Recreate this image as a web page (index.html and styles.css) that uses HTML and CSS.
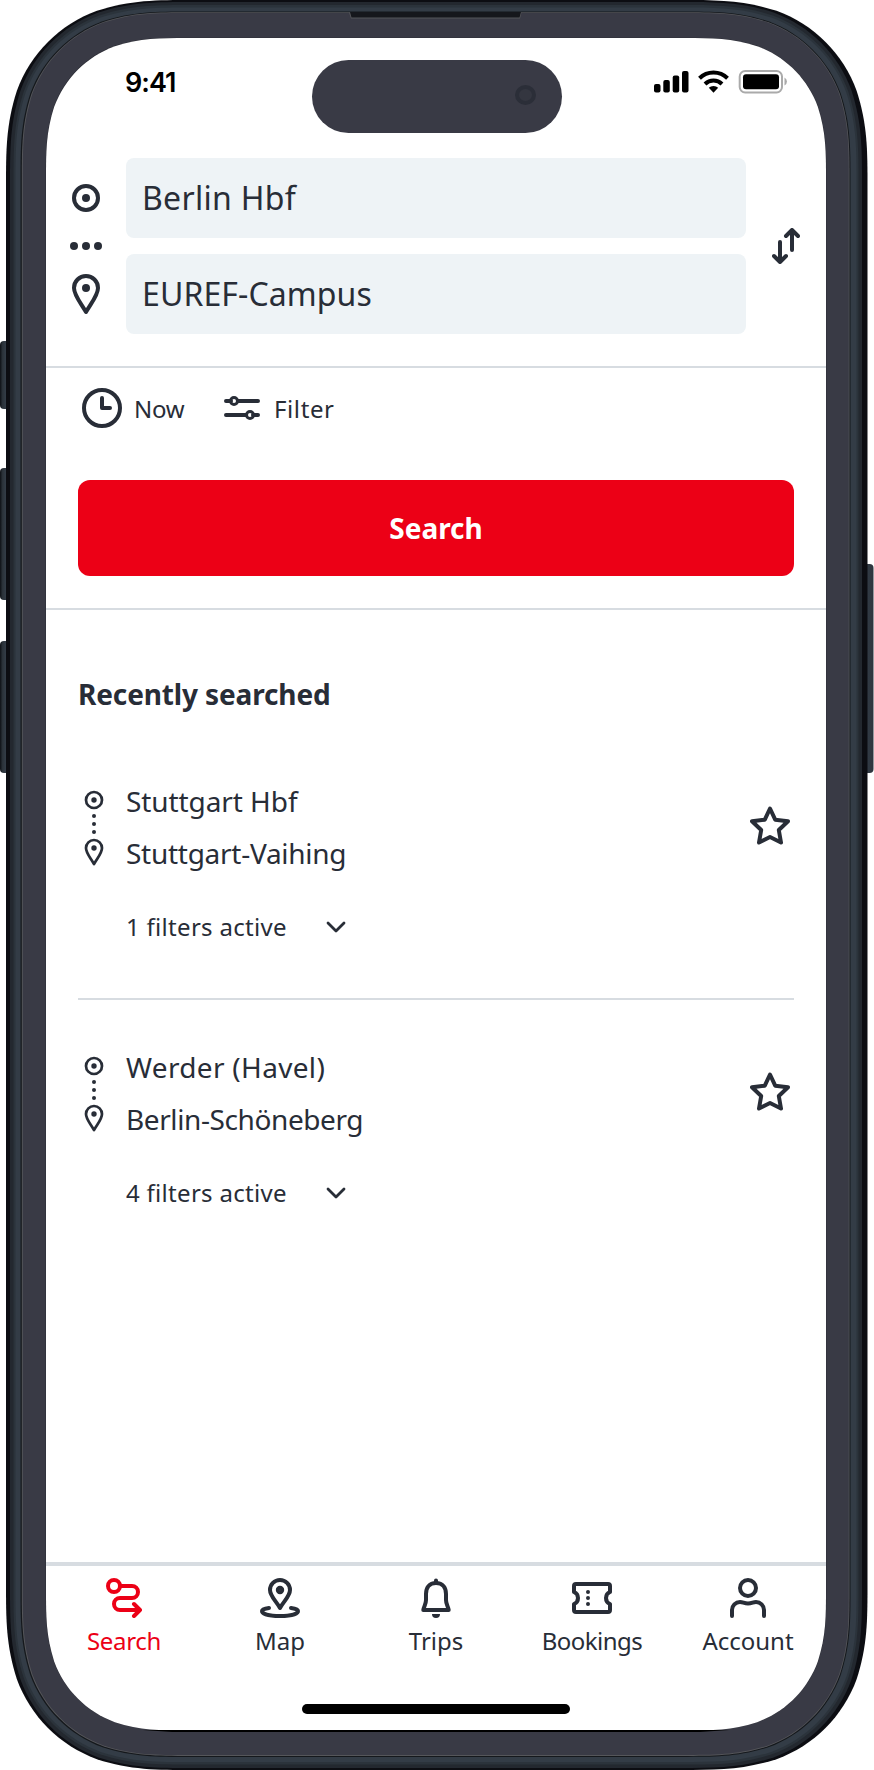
FILE: index.html
```html
<!DOCTYPE html>
<html lang="en">
<head>
<meta charset="utf-8">
<title>Search</title>
<link rel="stylesheet" href="styles.css">
</head>
<body>
<div class="device">
  <svg class="frame" id="frame" width="874" height="1770" viewBox="0 0 874 1770" aria-hidden="true">
    <defs>
      <linearGradient id="side" x1="0" x2="1"><stop offset="0" stop-color="#0d1015"/><stop offset=".2" stop-color="#2a3138"/><stop offset=".45" stop-color="#323b45"/><stop offset="1" stop-color="#2c343d"/></linearGradient>
    </defs>
    <g fill="url(#side)">
      <rect x="0" y="341" width="12" height="68" rx="4"/>
      <rect x="0" y="468" width="12" height="132" rx="4"/>
      <rect x="0" y="641" width="12" height="132" rx="4"/>
      <rect x="862" y="564" width="11.500" height="209" rx="4"/>
    </g>
  </svg>
  <main class="screen">
    <header class="status">
      <span class="time">9:41</span>
      <div class="island"><span class="camera"></span></div>
      <svg class="signals" width="136" height="24" viewBox="0 0 136 24">
        <rect x="0" y="14" width="6.500" height="8.500" rx="2"/><rect x="9.300" y="10" width="6.500" height="12.500" rx="2"/><rect x="18.700" y="5.500" width="6.500" height="17" rx="2"/><rect x="28" y="1" width="6.500" height="21.500" rx="2"/>
        <g fill="none" stroke="#000" stroke-width="4"><path d="M45.500 8.200a20 20 0 0 1 28 0"/><path d="M51 14a12.200 12.200 0 0 1 17 0"/></g>
        <path d="M54.800 17.800a6.800 6.800 0 0 1 9.400 0L59.500 22.800z"/>
        <rect x="85.700" y="1" width="42.300" height="21.500" rx="5.500" fill="none" stroke="#aaa" stroke-width="2"/><rect x="89" y="4.300" width="36" height="15" rx="3"/><path d="M130.500 7.500a4.500 4.500 0 0 1 0 8z" fill="#aaa"/>
      </svg>
    </header>

    <section class="route">
      <svg class="route-icons" width="32" height="160" viewBox="0 0 32 160">
        <circle cx="16" cy="24" r="12" fill="none" stroke="#282d37" stroke-width="4"/><circle cx="16" cy="24" r="4"/>
        <circle cx="4" cy="72" r="4"/><circle cx="16" cy="72" r="4"/><circle cx="28" cy="72" r="4"/>
        <path d="M16 102A12 12 0 0 0 4 114C4 121 10 128 16 138 22 128 28 121 28 114A12 12 0 0 0 16 102z" fill="none" stroke="#282d37" stroke-width="4" stroke-linejoin="round"/><circle cx="16" cy="114" r="4"/>
      </svg>
      <div class="fields">
        <div class="field from">Berlin Hbf</div>
        <div class="field to">EUREF-Campus</div>
      </div>
      <svg class="line-icon swap" width="28" height="36" viewBox="0 0 28 36"><path d="M20 22V2M14 8l6-6 6 6M8 14v20M2 28l6 6 6-6"/></svg>
    </section>

    <section class="options">
      <div class="chips">
        <svg class="line-icon" width="40" height="40" viewBox="0 0 40 40"><circle cx="20" cy="20" r="18"/><path d="M20 10v10h8"/></svg>
        <span class="now">Now</span>
        <svg class="line-icon" width="36" height="24" viewBox="0 0 36 24"><path d="M2 5h5M14 5h20M2 19h20M29 19h5"/><g stroke-width="3"><circle cx="10" cy="5" r="3.500"/><circle cx="26" cy="19" r="3.500"/></g></svg>
        <span class="filter">Filter</span>
      </div>
      <button class="search">Search</button>
    </section>

    <section class="recent">
      <h2>Recently searched</h2>
      <article class="trip">
        <svg class="stops" width="20" height="76" viewBox="0 0 20 76"><g fill="none" stroke="#282d37" stroke-width="2.700" stroke-linejoin="round"><circle cx="10" cy="10" r="8"/><path d="M10 50A8 8 0 0 0 2 58C2 63 6 67 10 74 14 67 18 63 18 58A8 8 0 0 0 10 50z"/></g><circle cx="10" cy="10" r="2.700"/><circle cx="10" cy="26" r="2"/><circle cx="10" cy="34" r="2"/><circle cx="10" cy="42" r="2"/><circle cx="10" cy="58" r="2.700"/></svg>
        <div class="info"><p class="s1">Stuttgart Hbf</p><p class="s2">Stuttgart-Vaihing</p>
          <div class="filters"><span>1 filters active</span><svg class="line-icon thin" width="20" height="12" viewBox="0 0 20 12"><path d="M2 2l8 8 8-8"/></svg></div></div>
        <svg class="line-icon star" width="40" height="40" viewBox="0 0 40 40"><path d="M20 2.500L25.200 13.700 38 15.200 28.800 24 31 36.500 20 31 9 36.500 11.200 24 2 15.200 14.800 13.700z"/></svg>
      </article>
      <article class="trip">
        <svg class="stops" width="20" height="76" viewBox="0 0 20 76"><g fill="none" stroke="#282d37" stroke-width="2.700" stroke-linejoin="round"><circle cx="10" cy="10" r="8"/><path d="M10 50A8 8 0 0 0 2 58C2 63 6 67 10 74 14 67 18 63 18 58A8 8 0 0 0 10 50z"/></g><circle cx="10" cy="10" r="2.700"/><circle cx="10" cy="26" r="2"/><circle cx="10" cy="34" r="2"/><circle cx="10" cy="42" r="2"/><circle cx="10" cy="58" r="2.700"/></svg>
        <div class="info"><p class="s3">Werder (Havel)</p><p class="s4">Berlin-Schöneberg</p>
          <div class="filters"><span>4 filters active</span><svg class="line-icon thin" width="20" height="12" viewBox="0 0 20 12"><path d="M2 2l8 8 8-8"/></svg></div></div>
        <svg class="line-icon star" width="40" height="40" viewBox="0 0 40 40"><path d="M20 2.500L25.200 13.700 38 15.200 28.800 24 31 36.500 20 31 9 36.500 11.200 24 2 15.200 14.800 13.700z"/></svg>
      </article>
    </section>

    <nav class="tabs">
      <a class="tab active"><svg class="line-icon" width="40" height="40" viewBox="0 0 40 40"><circle cx="10" cy="8" r="6"/><path d="M16 8h12a6 6 0 0 1 0 12H16a6 6 0 0 0 0 12h20M30 26l6 6-6 6"/></svg><span>Search</span></a>
      <a class="tab"><svg class="line-icon" width="40" height="40" viewBox="0 0 40 40"><path d="M20 2A10 10 0 0 0 10 12C10 18 16 23 20 30 24 23 30 18 30 12A10 10 0 0 0 20 2zM9 30C5 30.500 2 31.500 2 33 2 36 9 38 20 38S38 36 38 33C38 31.500 35 30.500 31 30"/><circle cx="20" cy="12" r="2.200"/></svg><span>Map</span></a>
      <a class="tab"><svg class="line-icon" width="40" height="40" viewBox="0 0 40 40"><path d="M20 5C13 5 10 10 10 16V22C10 26 8 28 7.300 32H32.700C32 28 30 26 30 22V16C30 10 27 5 20 5zM20 2.500v2"/><path d="M16 36h8a4 4 0 0 1-8 0z" fill="#282d37" stroke="none"/></svg><span>Trips</span></a>
      <a class="tab"><svg class="line-icon" width="40" height="40" viewBox="0 0 40 40"><path d="M2 14V8a2 2 0 0 1 2-2H36a2 2 0 0 1 2 2V14A6.500 6.500 0 0 0 38 26V32a2 2 0 0 1-2 2H4a2 2 0 0 1-2-2V26A6.500 6.500 0 0 0 2 14z"/><path d="M16 14v.01M16 20v.01M16 26v.01"/></svg><span class="bookings">Bookings</span></a>
      <a class="tab"><svg class="line-icon" width="40" height="40" viewBox="0 0 40 40"><circle cx="20" cy="10" r="8"/><path d="M4 38V32A8 8 0 0 1 12 24C15 24 16 25.500 20 25.500S25 24 28 24A8 8 0 0 1 36 32V38"/></svg><span>Account</span></a>
    </nav>
    <div class="home"></div>
  </main>
</div>
<script src="frame.js"></script>
</body>
</html>
```
FILE: styles.css
```css
* { box-sizing: border-box; }
body { margin: 0; background: #fff; color: #282d37; font-family: "Noto Sans", sans-serif; font-size: 24px; }
p, h2 { margin: 0; }
.device { position: relative; width: 874px; height: 1770px; overflow: hidden; }
.frame { position: absolute; left: 0; top: 0; }
.screen { position: relative; width: 780px; height: 1692px; margin: 38px 0 0 46px; display: flex; flex-direction: column; }
svg { display: block; flex: none; fill: #282d37; }
.line-icon { fill: none; stroke: #282d37; stroke-width: 4; stroke-linecap: round; stroke-linejoin: round; }
.thin { stroke-width: 2.8; }

.status { height: 120px; display: flex; padding: 22px 0 0 79px; }
.time { width: 187px; padding-top: 7px; font: 600 27px/32px Inter, sans-serif; letter-spacing: -1px; color: #000; }
.island { width: 250px; height: 73px; border-radius: 37px; background: #393a45; display: flex; justify-content: flex-end; padding: 25px 26px 0 0; }
.camera { width: 21px; height: 20px; border-radius: 50%; background: #343640; border: 4px solid #2b2e38; }
.signals { margin: 10px 0 0 92px; fill: #000; }

.route { height: 210px; border-bottom: 2px solid #d7dce1; display: flex; padding-left: 24px; }
.route-icons { margin-top: 16px; }
.fields { width: 620px; margin-left: 24px; display: flex; flex-direction: column; gap: 16px; }
.field { height: 80px; border-radius: 8px; background: #eef3f6; padding-left: 16px; font-size: 32px; line-height: 80px; }
.from { letter-spacing: .3px; }
.to { letter-spacing: .1px; }
.swap { margin: 70px 0 0 26px; }

.options { height: 242px; border-bottom: 2px solid #d7dce1; padding: 20px 32px 0; }
.chips { height: 40px; display: flex; align-items: center; margin-bottom: 52px; padding-left: 4px; }
.chips span { line-height: 40px; padding-top: 2px; }
.chips .now { width: 90px; margin-left: 12px; letter-spacing: -.3px; }
.chips .filter { margin-left: 14px; letter-spacing: .6px; }
.search { width: 716px; height: 96px; padding: 1px 0 0; border: 0; border-radius: 12px; background: #ec0016; color: #fff; font: 700 28px/95px "Noto Sans", sans-serif; }

.recent { flex: 1; padding: 0 32px; }
h2 { font-size: 28px; line-height: 40px; padding-top: 64px; height: 144px; letter-spacing: -.13px; }
.trip { height: 266px; display: flex; padding-top: 26px; }
.trip:nth-of-type(1) { height: 246px; border-bottom: 2px solid #d7dce1; }
.trip:nth-of-type(2) { padding-top: 46px; }
.stops { margin: 10px 0 0 6px; }
.info { flex: 1; margin-top: -5px; padding-left: 22px; font-size: 28px; line-height: 52px; }
.s1 { letter-spacing: -.08px; }
.s2 { letter-spacing: -.27px; }
.s3 { letter-spacing: .32px; }
.s4 { letter-spacing: -.4px; }
.filters { font-size: 24px; line-height: 40px; padding-top: 28px; display: flex; align-items: center; }
.filters span { width: 200px; letter-spacing: .3px; }
.star { margin: 26px 4px 0 0; }

.tabs { height: 142px; border-top: 4px solid #d7dce1; display: flex; }
.tab { flex: 1; display: flex; flex-direction: column; align-items: center; padding-top: 12px; }
.tab span { line-height: 36px; margin-top: 5px; }
.tab .bookings { letter-spacing: -.5px; }
.active { color: #ec0016; letter-spacing: -.3px; }
.active svg { stroke: #ec0016; }
.home { width: 268px; height: 10px; border-radius: 5px; background: #000; margin: 0 0 16px 256px; }
```
FILE: frame.js
```js
// Layered phone body: each layer is a rectangle with smooth, continuous corners.
const K = [1.3, 1.04, 0.866, 0.6315, 0.0749, 0.3728, 0.1691];

function smoothRect(l, t, r, b, rad) {
  const [e, c1, c2, m, n, p, q] = K.map(k => k * rad);
  const f = (x, y) => x + ' ' + y + ' ';
  return 'M' + f(l + e, t) +
    'H' + (r - e) +
    'C' + f(r - c1, t) + f(r - c2, t) + f(r - m, t + n) +
    'C' + f(r - p, t + q) + f(r - q, t + p) + f(r - n, t + m) +
    'C' + f(r, t + c2) + f(r, t + c1) + f(r, t + e) +
    'V' + (b - e) +
    'C' + f(r, b - c1) + f(r, b - c2) + f(r - n, b - m) +
    'C' + f(r - q, b - p) + f(r - p, b - q) + f(r - m, b - n) +
    'C' + f(r - c2, b) + f(r - c1, b) + f(r - e, b) +
    'H' + (l + e) +
    'C' + f(l + c1, b) + f(l + c2, b) + f(l + m, b - n) +
    'C' + f(l + p, b - q) + f(l + q, b - p) + f(l + n, b - m) +
    'C' + f(l, b - c2) + f(l, b - c1) + f(l, b - e) +
    'V' + (t + e) +
    'C' + f(l, t + c1) + f(l, t + c2) + f(l + n, t + m) +
    'C' + f(l + q, t + p) + f(l + p, t + q) + f(l + m, t + n) +
    'C' + f(l + c2, t) + f(l + c1, t) + f(l + e, t) + 'Z';
}

const layers = [
  [6, 0, 867.5, 1770, 144, '#0c0d12'],
  [10, 2, 862, 1768, 140, '#23282f'],
  [13.5, 5, 858.5, 1764.5, 137, '#2b333b'],
  [15.5, 7.5, 856.5, 1762, 135, '#333c46'],
  [20.5, 11.5, 850.5, 1757, 130, '#15181c'],
  [21.8, 12.3, 849.5, 1756, 129, '#55565a'],
  [22.8, 13, 848.7, 1755, 128, '#393a45'],
];
const svg = document.getElementById('frame');
function add(d, fill) {
  const path = document.createElementNS('http://www.w3.org/2000/svg', 'path');
  path.setAttribute('d', d);
  path.style.fill = fill;
  svg.appendChild(path);
}
layers.forEach(([l, t, r, b, rad, fill]) => add(smoothRect(l, t, r, b, rad), fill));
add('M349 12.500H521.500L520 18.600H351z', '#55565a');
add('M350 12H521L519.500 17.600H351.500z', '#15171c');
add(smoothRect(45.700, 37.700, 826.300, 1730.300, 109), '#24252d');
add(smoothRect(46, 38, 826, 1730.300, 109), '#fff');
add('M143 1730H729L700 1732H172z', '#000');
```
